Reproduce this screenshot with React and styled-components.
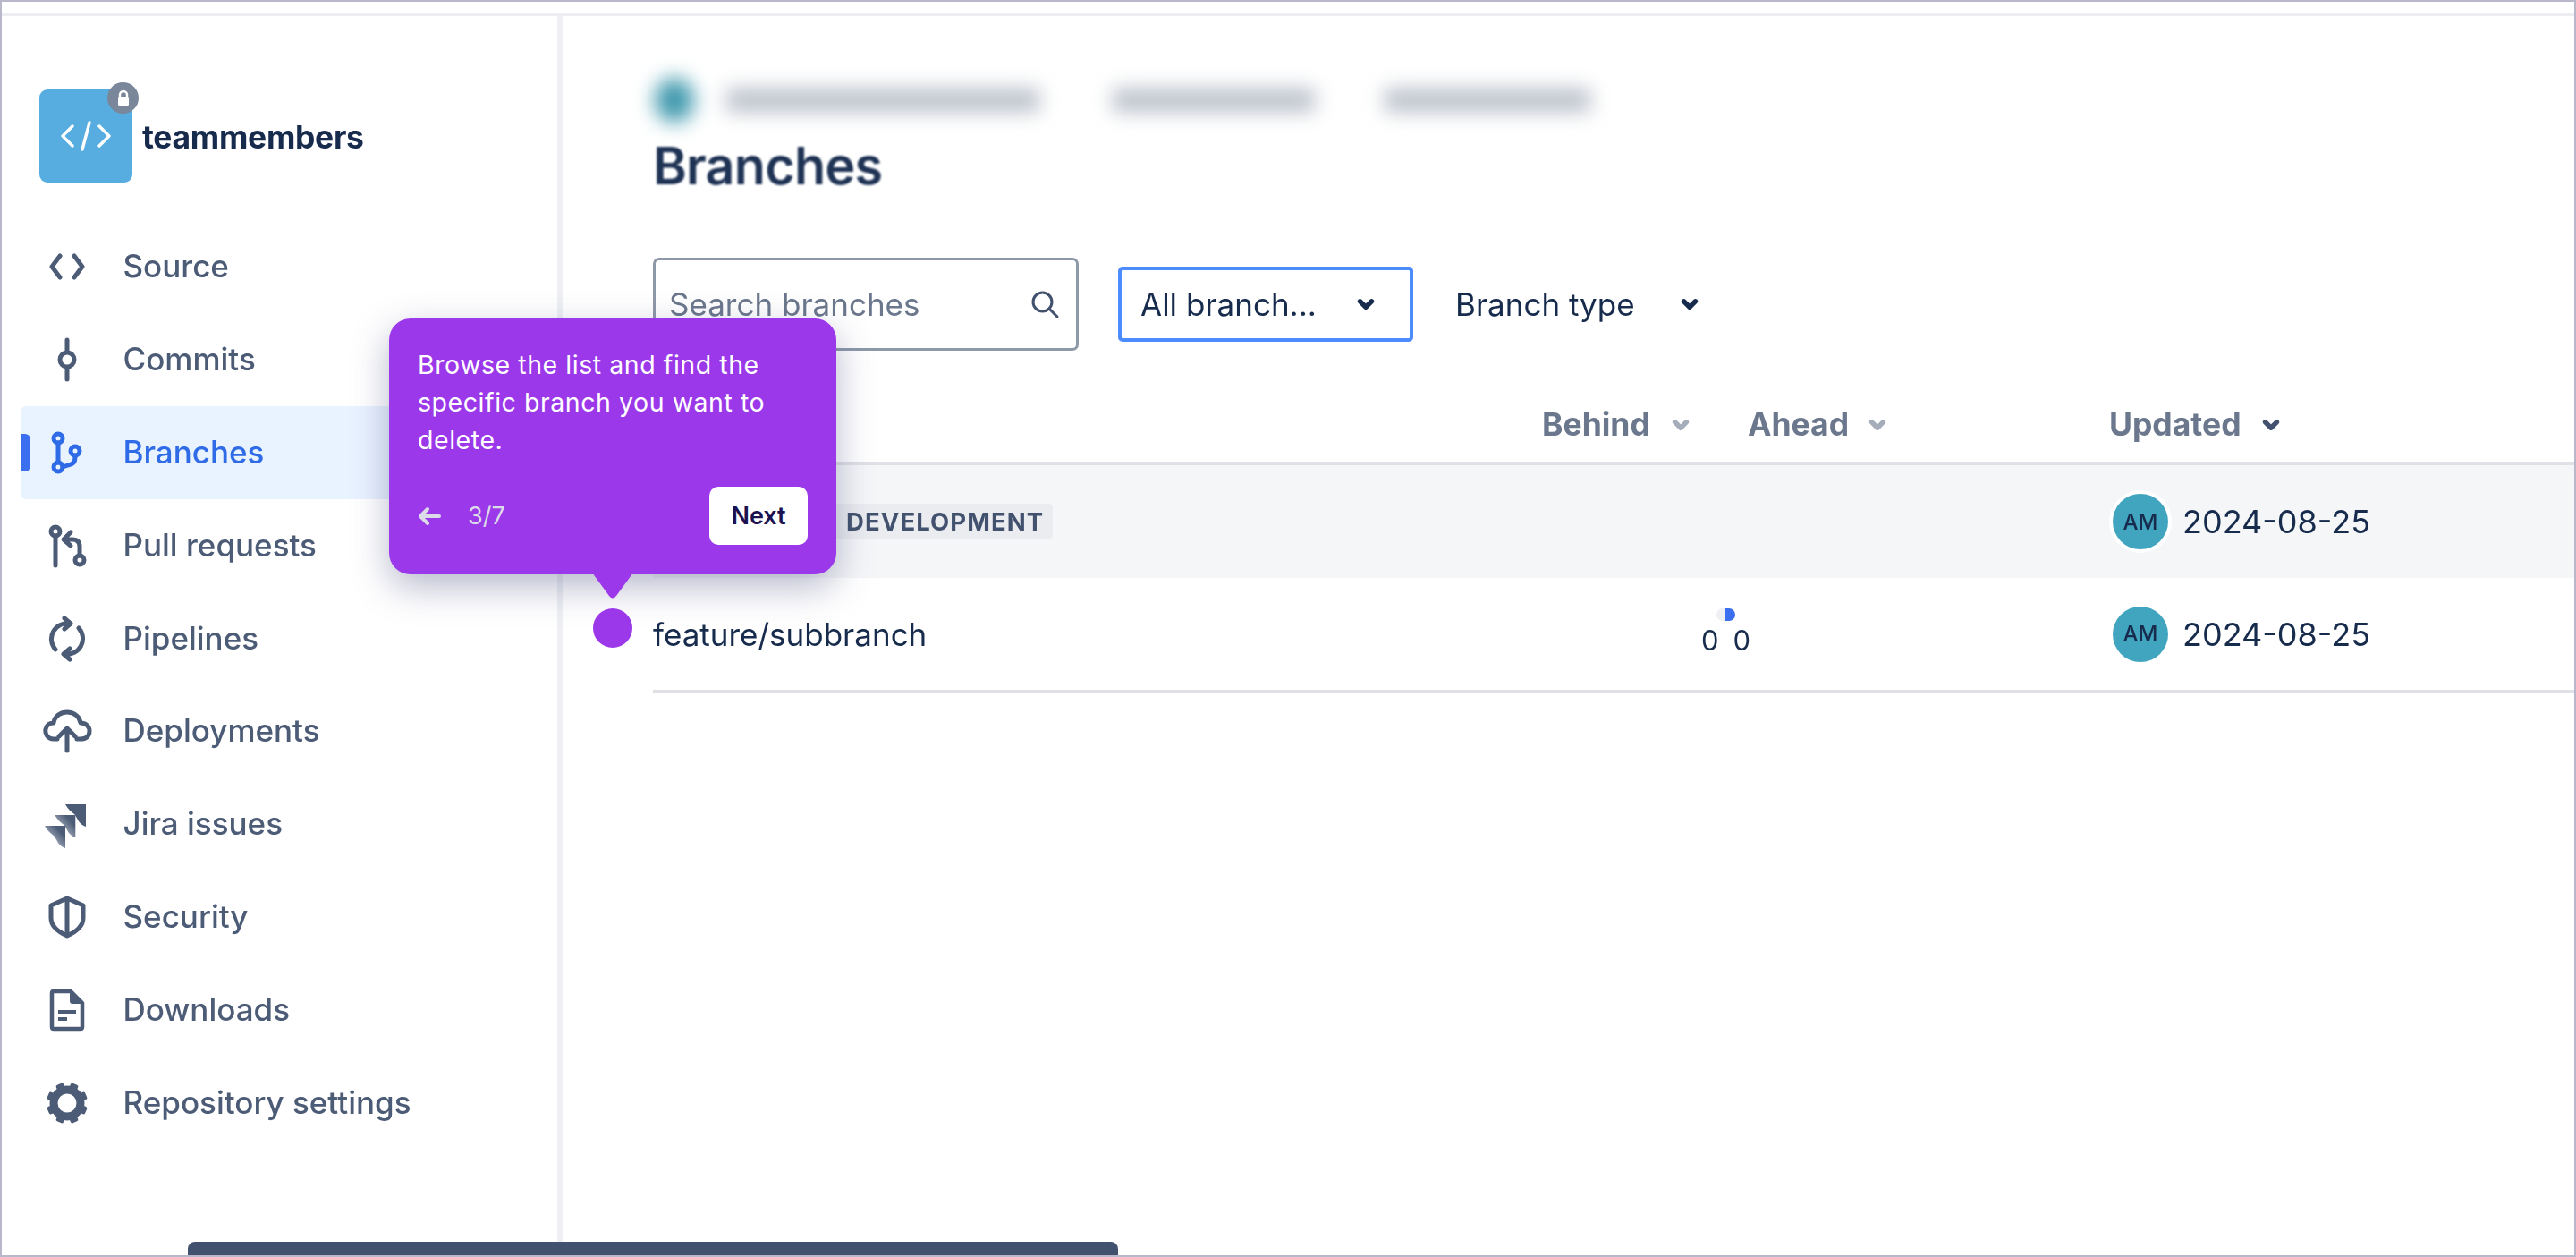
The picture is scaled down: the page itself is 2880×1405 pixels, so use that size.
import styled, { createGlobalStyle } from "styled-components";

const textDark = "#172b4d";
const navColor = "#42526e";
const subtle = "#6b778c";
const activeBlue = "#2f6be6";
const purple = "#9b38e9";

const GlobalStyle = createGlobalStyle`
  html, body {
    margin: 0;
    padding: 0;
    background: #ffffff;
  }
  * {
    box-sizing: border-box;
  }
`;

const Frame = styled.div`
  position: relative;
  width: 2880px;
  height: 1405px;
  overflow: hidden;
  border: 2px solid #b8b8ca;
  background: #ffffff;
  font-family: Inter, "Liberation Sans", sans-serif;
  color: ${textDark};
`;

const Shot = styled.div`
  display: flex;
  flex-direction: column;
  height: 100%;
  filter: blur(0.6px);
`;

const TopStrip = styled.div`
  height: 16px;
  flex: none;
  border-bottom: 3px solid #eceef2;
`;

const Body = styled.div`
  display: flex;
  flex: 1;
  min-height: 0;
`;

const Sidebar = styled.aside`
  width: 627px;
  flex: none;
  padding: 82px 0 0 0;
  border-right: 6px solid #eef0f4;
`;

const Brand = styled.div`
  display: flex;
  align-items: center;
  gap: 11px;
  padding-left: 42px;
  margin-bottom: 42px;
`;

const RepoLogo = styled.div`
  position: relative;
  width: 104px;
  height: 104px;
  border-radius: 9px;
  background: #57ade0;
  display: flex;
  align-items: center;
  justify-content: center;
`;

const LockBadge = styled.div`
  position: absolute;
  top: -8px;
  right: -7px;
  width: 35px;
  height: 35px;
  border-radius: 50%;
  background: #7a869a;
  display: flex;
  align-items: center;
  justify-content: center;
`;

const BrandName = styled.span`
  font-size: 35.5px;
  font-weight: 700;
  letter-spacing: -0.3px;
  position: relative;
  top: 1px;
`;

const NavList = styled.nav`
  display: flex;
  flex-direction: column;
  margin-left: 21px;
  width: 587px;
`;

const NavRow = styled.div`
  position: relative;
  display: flex;
  align-items: center;
  gap: 38.5px;
  height: 103.9px;
  padding-left: 28px;
  border-radius: 6px;
  background: ${(p) => (p.$active ? "#e9f2ff" : "transparent")};
  color: ${(p) => (p.$active ? activeBlue : navColor)};
  font-size: 35px;
  font-weight: 500;
  opacity: ${(p) => (p.$active ? 1 : 0.94)};
`;

const NavLabel = styled.span`
  position: relative;
  top: -1px;
`;

const ActiveMark = styled.span`
  position: absolute;
  left: 0;
  top: 31px;
  width: 11px;
  height: 42px;
  border-radius: 0 6px 6px 0;
  background: #3b6ff0;
`;

const NavIcon = styled.svg`
  width: 48px;
  height: 48px;
  flex: none;
  overflow: visible;
  fill: none;
  stroke: currentColor;
  stroke-width: 5;
  stroke-linecap: round;
  stroke-linejoin: round;
`;

const Main = styled.main`
  flex: 1;
  min-width: 0;
  padding: 62px 0 0 101px;
`;

const Crumbs = styled.div`
  display: flex;
  align-items: center;
  height: 60px;
  margin-top: 2px;
  margin-bottom: -2px;
  filter: blur(11px);
`;

const CrumbAvatar = styled.span`
  width: 44px;
  height: 50px;
  margin-left: 2px;
  border-radius: 50%;
  background: #3f98ad;
`;

const CrumbBar = styled.span`
  width: ${(p) => p.$w}px;
  height: 26px;
  margin-left: ${(p) => p.$gap}px;
  background: #b9bfc9;
`;

const Title = styled.h1`
  margin: 2px 0 0;
  font-size: 57.5px;
  line-height: 86px;
  font-weight: 600;
  letter-spacing: -0.8px;
  color: #1f3355;
  filter: blur(1px);
`;

const Controls = styled.div`
  display: flex;
  align-items: center;
  margin-top: 60px;
  height: 104px;
`;

const SearchBox = styled.div`
  width: 476px;
  height: 104px;
  flex: none;
  display: flex;
  align-items: center;
  justify-content: space-between;
  padding: 0 18px 0 15px;
  border: 3px solid #8f98a9;
  border-radius: 7px;
  font-size: 35px;
  color: ${subtle};
`;

const Select = styled.div`
  width: 330px;
  height: 84px;
  margin-left: 44px;
  flex: none;
  display: flex;
  align-items: center;
  justify-content: space-between;
  padding: 0 35px 0 21px;
  border: 4px solid #4c8cff;
  border-radius: 5px;
  font-size: 35px;
`;

const PlainSelect = styled.div`
  display: flex;
  align-items: center;
  gap: 47px;
  margin-left: 47px;
  font-size: 35px;
`;

const Table = styled.div`
  margin-top: 44px;
`;

const HeadRow = styled.div`
  display: grid;
  grid-template-columns: 994px 230px 404px 1fr;
  align-items: center;
  height: 84px;
  padding-bottom: 3px;
  border-bottom: 4px solid #dfe1e6;
  font-size: 35.5px;
  font-weight: 700;
  color: ${subtle};
`;

const HeadCell = styled.div`
  grid-column: ${(p) => p.$col};
  display: flex;
  align-items: center;
  gap: ${(p) => p.$gap}px;
`;

const Row = styled.div`
  display: grid;
  grid-template-columns: 994px 230px 404px 1fr;
  align-items: center;
  height: ${(p) => p.$h}px;
  background: ${(p) => (p.$shaded ? "#f5f6f8" : "transparent")};
  border-bottom: ${(p) => (p.$last ? "4px solid #dfe1e6" : "none")};
  font-size: 35px;
`;

const NameCell = styled.div`
  grid-column: 1;
  display: flex;
  align-items: center;
`;

const Lozenge = styled.span`
  margin-left: 192px;
  height: 40px;
  padding: 0 10px 0 24px;
  display: inline-flex;
  align-items: center;
  border-radius: 5px;
  background: #ebecf0;
  color: ${navColor};
  font-size: 27.5px;
  font-weight: 700;
  letter-spacing: 1.1px;
`;

const Stats = styled.div`
  grid-column: 2;
  justify-self: end;
  display: flex;
  flex-direction: column;
  align-items: center;
  gap: 4px;
  margin: -3px -3px 0 0;
`;

const Pill = styled.span`
  width: 21px;
  height: 14px;
  border-radius: 7px;
  overflow: hidden;
  display: flex;
  background: #eff0f4;
  justify-content: flex-end;
  &::after {
    content: "";
    width: 11px;
    height: 100%;
    background: #3b6ff0;
  }
`;

const Zeros = styled.div`
  display: flex;
  gap: 16px;
  font-size: 31px;
  line-height: 36px;
`;

const UpdatedCell = styled.div`
  grid-column: 4;
  display: flex;
  align-items: center;
  gap: 16px;
  padding-left: 4px;
  font-size: 36px;
`;

const Avatar = styled.span`
  width: 62px;
  height: 62px;
  border-radius: 50%;
  flex: none;
  display: flex;
  align-items: center;
  justify-content: center;
  background: #42a5c0;
  box-shadow: ${(p) => (p.$ring ? "0 0 0 4px #ffffff" : "none")};
  font-size: 24px;
  font-weight: 500;
`;

const BottomBar = styled.div`
  position: absolute;
  left: 208px;
  bottom: 0;
  width: 1040px;
  height: 15px;
  border-radius: 8px 8px 0 0;
  background: #42526e;
`;

const Tooltip = styled.div`
  position: absolute;
  left: 433px;
  top: 354px;
  width: 500px;
  height: 286px;
  padding: 31px 32px 0;
  border-radius: 24px;
  background: ${purple};
  box-shadow: 0 14px 40px rgba(66, 72, 120, 0.38);
  color: #ffffff;
  &::after {
    content: "";
    position: absolute;
    left: 227px;
    top: 284px;
    width: 46px;
    height: 30px;
    background: ${purple};
    clip-path: path("M0 0 H46 L27 26 Q23 31 19 26 Z");
  }
`;

const TipText = styled.p`
  margin: 0;
  font-size: 28.5px;
  line-height: 42px;
  font-weight: 400;
  letter-spacing: 0.55px;
`;

const TipFooter = styled.div`
  display: flex;
  align-items: center;
  margin-top: 31px;
`;

const TipCount = styled.span`
  margin-left: 30px;
  font-size: 27px;
  color: #dcdce8;
`;

const NextButton = styled.button`
  margin-left: auto;
  margin-right: 0;
  width: 110px;
  height: 65px;
  border: none;
  border-radius: 10px;
  background: #ffffff;
  color: #1c1250;
  font-family: inherit;
  font-size: 27px;
  font-weight: 600;
`;

const Dot = styled.span`
  position: absolute;
  left: 661px;
  top: 678px;
  width: 44px;
  height: 44px;
  border-radius: 50%;
  background: ${purple};
`;

function Chevron({ color = "currentColor", size = 28, weight = 5 }) {
  return (
    <svg width={size} height={size} viewBox="0 0 26 26" fill="none" stroke={color} strokeWidth={weight} strokeLinecap="round" strokeLinejoin="round">
      <path d="M7 10 L13 16 L19 10" />
    </svg>
  );
}

const navItems = [
  {
    label: "Source",
    icon: <path d="M16 12 L7 24 L16 36 M32 12 L41 24 L32 36" />,
  },
  {
    label: "Commits",
    icon: (
      <>
        <circle cx="24" cy="24" r="8" />
        <path d="M24 2 V15 M24 33 V46" />
      </>
    ),
  },
  {
    label: "Branches",
    active: true,
    icon: (
      <>
        <circle cx="14" cy="8" r="5" />
        <circle cx="14" cy="40" r="5" />
        <circle cx="33" cy="22" r="5" />
        <path d="M14 13 V35 M33 27 V29 Q33 37 25 38 Q22 39 19 40" />
      </>
    ),
  },
  {
    label: "Pull requests",
    icon: (
      <>
        <circle cx="11" cy="8" r="5" />
        <circle cx="38" cy="40" r="5" />
        <path d="M11 13 V46 M38 35 V25 Q38 17 30 17 H21 M28 9 L20 17 L28 24" />
      </>
    ),
  },
  {
    label: "Pipelines",
    icon: (
      <path d="M27 7 A17.5 17.5 0 0 0 11 36 M21 41 A17.5 17.5 0 0 0 37 12 M21 1 L28 7 L21 13 M27 35 L20 41 L27 47" />
    ),
  },
  {
    label: "Deployments",
    icon: (
      <path d="M13 33 H9 C2 33 -1 27 0 22 C1 17 5 15 9 15 C10 7 17 3 24 3 C32 3 38 8 39 15 C45 15 49 19 49 24 C49 30 45 33 39 33 H35 M24 46 V22 M15 30 L24 21 L33 30" />
    ),
  },
  {
    label: "Jira issues",
    icon: (
      <g stroke="none">
        <defs>
          <linearGradient id="jiraFade" x1="1" y1="0" x2="0" y2="1">
            <stop offset="0.25" stopColor="#42526e" />
            <stop offset="0.85" stopColor="#c2c9d6" />
          </linearGradient>
        </defs>
        <path fill="#42526e" d="M22 2 H45 V27 C38 25 36 19 33 14 C30 11 25 8 22 2Z" />
        <path fill="url(#jiraFade)" transform="translate(-11.7 12)" d="M22 2 H45 V27 C38 25 36 19 33 14 C30 11 25 8 22 2Z" />
        <path fill="url(#jiraFade)" transform="translate(-23 24)" d="M22 2 H45 V27 C38 25 36 19 33 14 C30 11 25 8 22 2Z" />
      </g>
    ),
  },
  {
    label: "Security",
    icon: <path d="M24 3 L42 11 V25 C42 34 33 41 24 45 C15 41 6 34 6 25 V11 Z M24 3 V45" />,
  },
  {
    label: "Downloads",
    icon: (
      <>
        <path strokeWidth="4.5" d="M9 3 H28 L41 16 V43 Q41 45 39 45 H9 Q7 45 7 43 V5 Q7 3 9 3 Z" />
        <path fill="currentColor" stroke="none" d="M27 2 L42 17 H30 Q27 17 27 14 Z" />
        <path strokeWidth="4" strokeLinecap="butt" d="M14 26 H34 M14 34 H24" />
      </>
    ),
  },
  {
    label: "Repository settings",
    icon: (
      <>
        <circle cx="24" cy="24" r="15" strokeWidth="9" />
        {[0, 1, 2, 3, 4, 5, 6, 7].map((i) => (
          <rect
            key={i}
            x="19.5"
            y="1"
            width="9"
            height="8"
            rx="2"
            fill="currentColor"
            stroke="none"
            transform={`rotate(${22.5 + i * 45} 24 24)`}
          />
        ))}
      </>
    ),
  },
];

const branches = [
  { id: "dev", shaded: true, h: 126, lozenge: "DEVELOPMENT", ring: true },
  { id: "feature", h: 129, name: "feature/subbranch", stats: true, last: true },
];

function App() {
  return (
    <Frame>
      <GlobalStyle />
      <Shot>
        <TopStrip />
        <Body>
          <Sidebar>
            <Brand>
              <RepoLogo>
                <LockBadge>
                  <svg width="18" height="20" viewBox="0 0 18 20">
                    <path d="M5 9 V6 A4 4 0 0 1 13 6 V9" fill="none" stroke="#ffffff" strokeWidth="2.4" />
                    <rect x="3" y="8" width="12" height="10" rx="1.5" fill="#ffffff" />
                  </svg>
                </LockBadge>
                <svg width="56" height="34" viewBox="0 0 56 34" fill="none" stroke="#ffffff" strokeWidth="3.4" strokeLinecap="round" strokeLinejoin="round">
                  <path d="M13 6 L2 17 L13 28 M43 6 L54 17 L43 28 M32 2 L24 32" />
                </svg>
              </RepoLogo>
              <BrandName>teammembers</BrandName>
            </Brand>
            <NavList>
              {navItems.map((item) => (
                <NavRow key={item.label} $active={item.active}>
                  {item.active && <ActiveMark />}
                  <NavIcon viewBox="0 0 48 48">{item.icon}</NavIcon>
                  <NavLabel>{item.label}</NavLabel>
                </NavRow>
              ))}
            </NavList>
          </Sidebar>
          <Main>
            <Crumbs>
              <CrumbAvatar />
              <CrumbBar $w={350} $gap={36} />
              <CrumbBar $w={226} $gap={82} />
              <CrumbBar $w={230} $gap={78} />
            </Crumbs>
            <Title>Branches</Title>
            <Controls>
              <SearchBox>
                Search branches
                <svg width="34" height="34" viewBox="0 0 34 34" fill="none" stroke="#42526e" strokeWidth="3" strokeLinecap="round">
                  <circle cx="14.5" cy="14.5" r="10.5" />
                  <path d="M22 22 L31 31" />
                </svg>
              </SearchBox>
              <Select>
                All branch...
                <Chevron />
              </Select>
              <PlainSelect>
                Branch type
                <Chevron />
              </PlainSelect>
            </Controls>
            <Table>
              <HeadRow>
                <HeadCell $col={2} $gap={20}>
                  Behind
                  <Chevron color="#a5adba" />
                </HeadCell>
                <HeadCell $col={3} $gap={18}>
                  Ahead
                  <Chevron color="#a5adba" />
                </HeadCell>
                <HeadCell $col={4} $gap={19}>
                  Updated
                  <Chevron color="#42526e" />
                </HeadCell>
              </HeadRow>
              {branches.map((row) => (
                <Row key={row.id} $shaded={row.shaded} $h={row.h} $last={row.last}>
                  <NameCell>
                    {row.name}
                    {row.lozenge && <Lozenge>{row.lozenge}</Lozenge>}
                  </NameCell>
                  {row.stats && (
                    <Stats>
                      <Pill />
                      <Zeros>
                        <span>0</span>
                        <span>0</span>
                      </Zeros>
                    </Stats>
                  )}
                  <UpdatedCell>
                    <Avatar $ring={row.ring}>AM</Avatar>
                    2024-08-25
                  </UpdatedCell>
                </Row>
              ))}
            </Table>
          </Main>
        </Body>
        <BottomBar />
      </Shot>
      <Tooltip>
        <TipText>Browse the list and find the specific branch you want to delete.</TipText>
        <TipFooter>
          <svg width="26" height="22" viewBox="0 0 26 22" fill="none" stroke="#dcdce8" strokeWidth="4" strokeLinecap="round" strokeLinejoin="round">
            <path d="M24 11 H3 M11 3 L3 11 L11 19" />
          </svg>
          <TipCount>3/7</TipCount>
          <NextButton>Next</NextButton>
        </TipFooter>
      </Tooltip>
      <Dot />
    </Frame>
  );
}

export default App;
